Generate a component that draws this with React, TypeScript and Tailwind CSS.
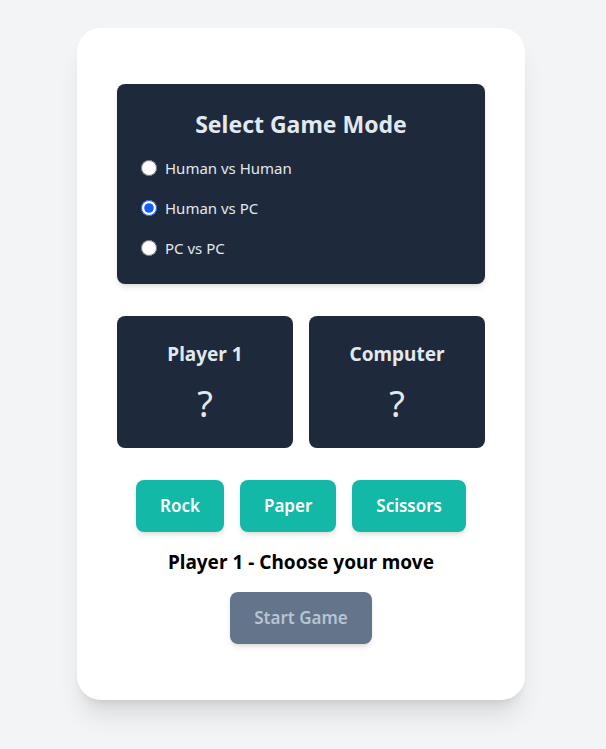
import { useState } from "react"

const modes = ["Human vs Human", "Human vs PC", "PC vs PC"]
const moves = ["Rock", "Paper", "Scissors"]

export default function App() {
  const [mode, setMode] = useState("Human vs PC")

  return (
    <div
      className="min-h-screen bg-gray-100 flex justify-center pt-7 pr-1"
      style={{ fontFamily: '"Noto Sans", "Open Sans", sans-serif' }}
    >
      <div className="w-[448px] h-fit bg-white rounded-3xl shadow-xl px-10 py-14">
        {/* Mode select */}
        <div className="bg-[#1e293b] rounded-lg shadow-md p-6 text-[#e2e8f0]">
          <h2 className="text-[23px] leading-8 font-bold text-center mb-4">Select Game Mode</h2>
          <div className="space-y-4">
            {modes.map((m) => (
              <label key={m} className="flex items-center h-6 text-[15px]">
                <input
                  type="radio"
                  name="mode"
                  checked={mode === m}
                  onChange={() => setMode(m)}
                  className="h-4 w-4 mr-2 accent-blue-600"
                />
                {m}
              </label>
            ))}
          </div>
        </div>

        {/* Players */}
        <div className="grid grid-cols-2 gap-4 mt-8">
          {["Player 1", "Computer"].map((p) => (
            <div key={p} className="bg-[#1e293b] rounded-lg p-6 text-center text-[#e2e8f0]">
              <h3 className="text-[19px] leading-7 font-bold">{p}</h3>
              <div className="text-4xl mt-4">?</div>
            </div>
          ))}
        </div>

        {/* Moves */}
        <div className="flex justify-center gap-4 mt-8">
          {moves.map((m) => (
            <button key={m} className="bg-[#14b8a6] text-white font-semibold text-[17px] leading-7 px-6 py-3 rounded-lg shadow-md">
              {m}
            </button>
          ))}
        </div>

        <p className="text-center text-[19px] leading-7 font-bold text-black mt-4">Player 1 - Choose your move</p>

        <div className="flex justify-center mt-4">
          <button disabled className="bg-[#64748b] text-[#b8c3d3] font-semibold text-[17px] leading-7 px-6 py-3 rounded-lg shadow-md">
            Start Game
          </button>
        </div>
      </div>
    </div>
  )
}
